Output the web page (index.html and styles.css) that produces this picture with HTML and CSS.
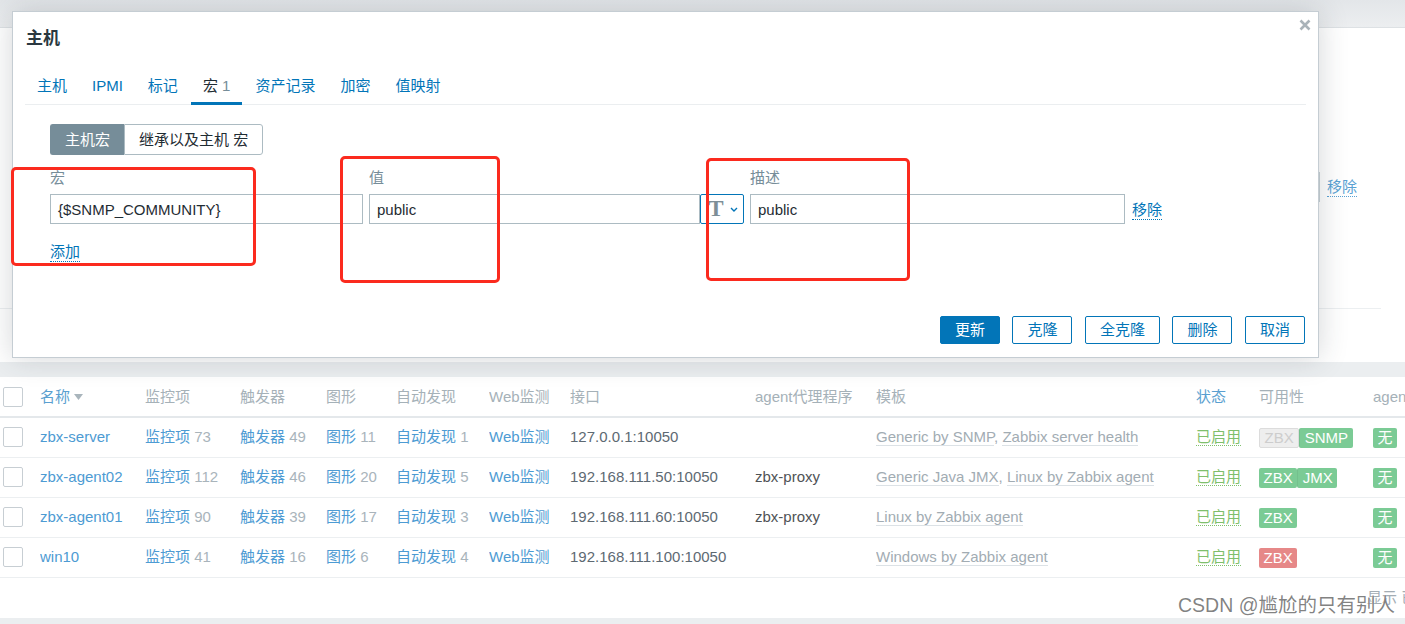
FILE: index.html
```html
<!DOCTYPE html>
<html lang="zh-CN">
<head>
<meta charset="utf-8">
<title>主机</title>
<link rel="stylesheet" href="styles.css">
</head>
<body>
<div class="page">
  <div class="topbar"></div>
  <div class="filter">
    <div class="filter-row">
      <div class="filter-input"></div>
      <a class="dlink">移除</a>
    </div>
    <div class="filter-sep"></div>
  </div>
  <div class="card">
    <div class="row head">
      <div class="c chk"><span class="cb"></span></div>
      <div class="c"><a class="hlink">名称</a><svg class="sort" width="9" height="6" viewBox="0 0 9 6"><polygon points="0,0 9,0 4.5,6" fill="#a9b5bc"/></svg></div>
      <div class="c">监控项</div>
      <div class="c">触发器</div>
      <div class="c">图形</div>
      <div class="c">自动发现</div>
      <div class="c">Web监测</div>
      <div class="c">接口</div>
      <div class="c">agent代理程序</div>
      <div class="c">模板</div>
      <div class="c"><a class="hlink">状态</a></div>
      <div class="c">可用性</div>
      <div class="c">agent 加密</div>
    </div>
    <div class="row">
      <div class="c chk"><span class="cb"></span></div>
      <div class="c"><a class="lnk">zbx-server</a></div>
      <div class="c"><a class="lnk">监控项</a> <span class="cnt">73</span></div>
      <div class="c"><a class="lnk">触发器</a> <span class="cnt">49</span></div>
      <div class="c"><a class="lnk">图形</a> <span class="cnt">11</span></div>
      <div class="c"><a class="lnk">自动发现</a> <span class="cnt">1</span></div>
      <div class="c"><a class="lnk">Web监测</a></div>
      <div class="c iface">127.0.0.1:10050</div>
      <div class="c proxy"></div>
      <div class="c tpl"><a class="tlink">Generic by SNMP</a>, <a class="tlink">Zabbix server health</a></div>
      <div class="c"><a class="status">已启用</a></div>
      <div class="c"><span class="badges"><span class="badge off">ZBX</span><span class="badge ok">SNMP</span></span></div>
      <div class="c"><span class="badge ok">无</span></div>
    </div>
    <div class="row">
      <div class="c chk"><span class="cb"></span></div>
      <div class="c"><a class="lnk">zbx-agent02</a></div>
      <div class="c"><a class="lnk">监控项</a> <span class="cnt">112</span></div>
      <div class="c"><a class="lnk">触发器</a> <span class="cnt">46</span></div>
      <div class="c"><a class="lnk">图形</a> <span class="cnt">20</span></div>
      <div class="c"><a class="lnk">自动发现</a> <span class="cnt">5</span></div>
      <div class="c"><a class="lnk">Web监测</a></div>
      <div class="c iface">192.168.111.50:10050</div>
      <div class="c proxy">zbx-proxy</div>
      <div class="c tpl"><a class="tlink">Generic Java JMX</a>, <a class="tlink">Linux by Zabbix agent</a></div>
      <div class="c"><a class="status">已启用</a></div>
      <div class="c"><span class="badges"><span class="badge ok">ZBX</span><span class="badge ok">JMX</span></span></div>
      <div class="c"><span class="badge ok">无</span></div>
    </div>
    <div class="row">
      <div class="c chk"><span class="cb"></span></div>
      <div class="c"><a class="lnk">zbx-agent01</a></div>
      <div class="c"><a class="lnk">监控项</a> <span class="cnt">90</span></div>
      <div class="c"><a class="lnk">触发器</a> <span class="cnt">39</span></div>
      <div class="c"><a class="lnk">图形</a> <span class="cnt">17</span></div>
      <div class="c"><a class="lnk">自动发现</a> <span class="cnt">3</span></div>
      <div class="c"><a class="lnk">Web监测</a></div>
      <div class="c iface">192.168.111.60:10050</div>
      <div class="c proxy">zbx-proxy</div>
      <div class="c tpl"><a class="tlink">Linux by Zabbix agent</a></div>
      <div class="c"><a class="status">已启用</a></div>
      <div class="c"><span class="badges"><span class="badge ok">ZBX</span></span></div>
      <div class="c"><span class="badge ok">无</span></div>
    </div>
    <div class="row">
      <div class="c chk"><span class="cb"></span></div>
      <div class="c"><a class="lnk">win10</a></div>
      <div class="c"><a class="lnk">监控项</a> <span class="cnt">41</span></div>
      <div class="c"><a class="lnk">触发器</a> <span class="cnt">16</span></div>
      <div class="c"><a class="lnk">图形</a> <span class="cnt">6</span></div>
      <div class="c"><a class="lnk">自动发现</a> <span class="cnt">4</span></div>
      <div class="c"><a class="lnk">Web监测</a></div>
      <div class="c iface">192.168.111.100:10050</div>
      <div class="c proxy"></div>
      <div class="c tpl"><a class="tlink">Windows by Zabbix agent</a></div>
      <div class="c"><a class="status">已启用</a></div>
      <div class="c"><span class="badges"><span class="badge err">ZBX</span></span></div>
      <div class="c"><span class="badge ok">无</span></div>
    </div>
    <div class="card-foot">显示 已自动发现 4中的4</div>
  </div>
</div>

<div class="modal">
  <button class="close" aria-label="关闭"><svg width="12" height="12" viewBox="0 0 12 12"><path d="M1.5 1.5 L10.5 10.5 M10.5 1.5 L1.5 10.5" stroke="#a9b3b9" stroke-width="2.6" stroke-linecap="butt"/></svg></button>
  <div class="modal-head"><h2 class="modal-title">主机</h2></div>
  <div class="tabs">
    <a class="tab">主机</a>
    <a class="tab">IPMI</a>
    <a class="tab">标记</a>
    <a class="tab active">宏 <span class="tab-count">1</span></a>
    <a class="tab">资产记录</a>
    <a class="tab">加密</a>
    <a class="tab">值映射</a>
  </div>
  <div class="macros">
    <div class="seg">
      <span class="seg-btn on">主机宏</span>
      <span class="seg-btn">继承以及主机 宏</span>
    </div>
    <div class="macro-grid">
      <div class="lbl">宏</div>
      <div class="lbl">值</div>
      <div class="lbl">描述</div>
      <div></div>
      <div class="input">{$SNMP_COMMUNITY}</div>
      <div class="value-group">
        <div class="input grow">public</div>
        <button class="type-btn"><span class="type-t">T</span><svg width="8" height="5" viewBox="0 0 8 5"><polyline points="1,1 4,4 7,1" fill="none" stroke="#0275b8" stroke-width="1.4"/></svg></button>
      </div>
      <div class="input">public</div>
      <a class="dlink remove">移除</a>
    </div>
    <a class="dlink add">添加</a>
  </div>
  <div class="modal-foot">
    <button class="btn primary">更新</button>
    <button class="btn">克隆</button>
    <button class="btn">全克隆</button>
    <button class="btn">删除</button>
    <button class="btn">取消</button>
  </div>
</div>

<div class="anno a1"></div>
<div class="anno a2"></div>
<div class="anno a3"></div>

<div class="watermark">CSDN @尴尬的只有别人</div>
</body>
</html>
```

FILE: styles.css
```css
html, body {
  margin: 0;
  padding: 0;
}
body {
  width: 1405px;
  height: 624px;
  overflow: hidden;
  position: relative;
  background: #ebeef0;
  font-family: "Liberation Sans", "Noto Sans CJK SC", sans-serif;
  font-size: 15px;
  line-height: 20px;
  color: #1f2c33;
}
a { text-decoration: none; cursor: pointer; }
button { font: inherit; margin: 0; cursor: pointer; }

/* ---------- background page ---------- */
.page {
  display: flex;
  flex-direction: column;
}
.topbar {
  height: 28px;
  box-sizing: border-box;
  background: linear-gradient(#e3e6e9, #eceef0);
  border-bottom: 1px solid #dde1e4;
}
.filter {
  height: 334px;
  background: #fff;
  box-sizing: border-box;
}
.filter-row {
  display: flex;
  align-items: center;
  padding-top: 144px;
}
.filter-input {
  margin-left: 1000px;
  width: 320px;
  height: 30px;
  box-sizing: border-box;
  border: 1px solid #c9d3d8;
  background: #fff;
}
.filter-row .dlink {
  margin-left: 7px;
  color: #5aa2d3;
  border-bottom-color: #5aa2d3;
}
.filter-sep {
  margin-top: 106px;
  width: 1381px;
  border-top: 1px solid #eceff1;
}

.card {
  margin-top: 15px;
  width: 1545px;
  background: #fff;
}
.row {
  display: grid;
  grid-template-columns: 40px 105px 95px 86px 70px 93px 81px 185px 121px 320px 63px 114px 172px;
  height: 40px;
  box-sizing: border-box;
  border-bottom: 1px solid #eceff1;
  align-items: center;
  white-space: nowrap;
  padding-bottom: 2px;
}
.row.head {
  height: 41px;
  padding-bottom: 0;
  border-bottom: 2px solid #e4e8eb;
  color: #a5b1b8;
}
.c {
  overflow: hidden;
  line-height: 22px;
}
.c.chk {
  padding-left: 3px;
  display: flex;
  align-items: center;
}
.cb {
  display: block;
  width: 20px;
  height: 20px;
  box-sizing: border-box;
  border: 1px solid #c7ced3;
  border-radius: 2px;
  background: #fff;
}
.hlink { color: #5a9fd0; }
.sort { margin-left: 4px; vertical-align: 2px; }
.lnk { color: #4d9bd3; }
.cnt { color: #a9b4bb; }
.iface { color: #5d6972; }
.proxy { color: #4f5356; }
.tpl { color: #a2acb3; }
.tlink {
  color: #a2acb3;
  border-bottom: 1px solid #dce2e6;
}
.status {
  color: #7fbf6c;
  border-bottom: 1px dotted #7fbf6c;
}
.badges { display: inline-flex; vertical-align: middle; }
.badge {
  display: inline-block;
  height: 20px;
  line-height: 20px;
  padding: 0 4.5px;
  border-radius: 2px;
  color: #fff;
  box-sizing: border-box;
  vertical-align: middle;
}
.badges .badge + .badge { border-left: 1px solid rgba(0, 0, 0, 0.05); }
.badge.ok { background: #7bcb95; }
.badge.err { background: #e68888; }
.badge.off {
  background: #eeeeee;
  color: #cdcdcd;
  border: 1px solid #dcdcdc;
  line-height: 18px;
}
.card-foot {
  height: 40px;
  display: flex;
  align-items: center;
  justify-content: flex-end;
  padding-right: 18px;
  color: #a3adb4;
}

/* ---------- modal ---------- */
.modal {
  position: absolute;
  left: 12px;
  top: 11px;
  width: 1307px;
  height: 347px;
  box-sizing: border-box;
  background: #fff;
  border: 1px solid #c5cdd3;
  box-shadow: 0 0 28px rgba(40, 50, 60, 0.2);
  padding: 0 12px 13px;
  display: flex;
  flex-direction: column;
}
.close {
  position: absolute;
  top: 6px;
  right: 6px;
  width: 14px;
  height: 14px;
  padding: 1px;
  border: 0;
  background: none;
  line-height: 0;
}
.modal-head {
  height: 55px;
  display: flex;
  align-items: center;
  padding-bottom: 2px;
  box-sizing: border-box;
}
.modal-title {
  margin: 0 0 0 1px;
  font-size: 17px;
  line-height: 22px;
  font-weight: bold;
  color: #2a3840;
}
.tabs {
  display: flex;
  height: 38px;
  box-sizing: border-box;
  border-bottom: 1px solid #ebeef0;
}
.tab {
  position: relative;
  padding: 0 12px;
  margin-right: 1px;
  line-height: 37px;
  color: #0275b8;
}
.tab.active { color: #1f2c33; }
.tab.active::after {
  content: "";
  position: absolute;
  left: 0;
  right: 0;
  bottom: -1px;
  height: 3px;
  background: #0275b8;
}
.tab-count { color: #768d99; }

.macros {
  padding: 19px 0 0 25px;
  display: flex;
  flex-direction: column;
  align-items: flex-start;
}
.seg { display: flex; }
.seg-btn {
  height: 31px;
  box-sizing: border-box;
  padding: 0 14px;
  line-height: 29px;
  border: 1px solid #acbbc2;
  background: #fff;
  color: #1f2c33;
}
.seg-btn:first-child { border-radius: 3px 0 0 3px; border-right: 0; }
.seg-btn:last-child { border-radius: 0 3px 3px 0; }
.seg-btn.on {
  background: #768d99;
  border-color: #768d99;
  color: #fff;
}
.macro-grid {
  display: grid;
  grid-template-columns: 313px 375px 375px auto;
  column-gap: 6px;
  row-gap: 6px;
  margin-top: 13px;
  align-items: center;
}
.lbl { color: #768d99; line-height: 20px; }
.input {
  height: 30px;
  box-sizing: border-box;
  border: 1px solid #acbbc2;
  padding: 0 7px;
  line-height: 29px;
  color: #1f2c33;
  background: #fff;
  white-space: nowrap;
}
.value-group { display: flex; }
.value-group .grow { flex: 1; }
.type-btn {
  width: 44px;
  height: 30px;
  box-sizing: border-box;
  border: 1px solid #0275b8;
  border-radius: 2px;
  background: #fff;
  display: flex;
  align-items: center;
  justify-content: center;
  gap: 6px;
  padding: 0 0 0 2px;
}
.type-t {
  font-family: "Liberation Serif", "DejaVu Serif", serif;
  font-weight: bold;
  font-size: 23px;
  line-height: 24px;
  color: #7d8e97;
}
.dlink {
  display: inline-block;
  line-height: 19px;
  color: #0275b8;
  border-bottom: 1px dotted #0275b8;
}
.remove { margin-left: 1px; justify-self: start; margin-top: 1px; }
.add { margin-top: 18px; }

.modal-foot {
  margin-top: auto;
  display: flex;
  justify-content: flex-end;
  gap: 12.5px;
  padding-right: 1px;
}
.btn {
  height: 28px;
  box-sizing: border-box;
  padding: 0 14px;
  line-height: 26px;
  border: 1px solid #0275b8;
  border-radius: 2px;
  background: #fff;
  color: #0275b8;
}
.btn.primary {
  background: #0275b8;
  color: #fff;
}

/* ---------- annotations ---------- */
.anno {
  position: absolute;
  box-sizing: border-box;
  border: 3px solid #fb2a1e;
  border-radius: 5px;
}
.a1 { left: 11px; top: 167px; width: 245px; height: 99px; }
.a2 { left: 340px; top: 156px; width: 160px; height: 127px; }
.a3 { left: 706px; top: 158px; width: 204px; height: 123px; }

.watermark {
  position: absolute;
  left: 1178px;
  top: 593px;
  font-size: 19.5px;
  line-height: 24px;
  color: rgba(95, 95, 95, 0.78);
  white-space: nowrap;
  text-shadow: 0 0 1px #fff;
}
```
